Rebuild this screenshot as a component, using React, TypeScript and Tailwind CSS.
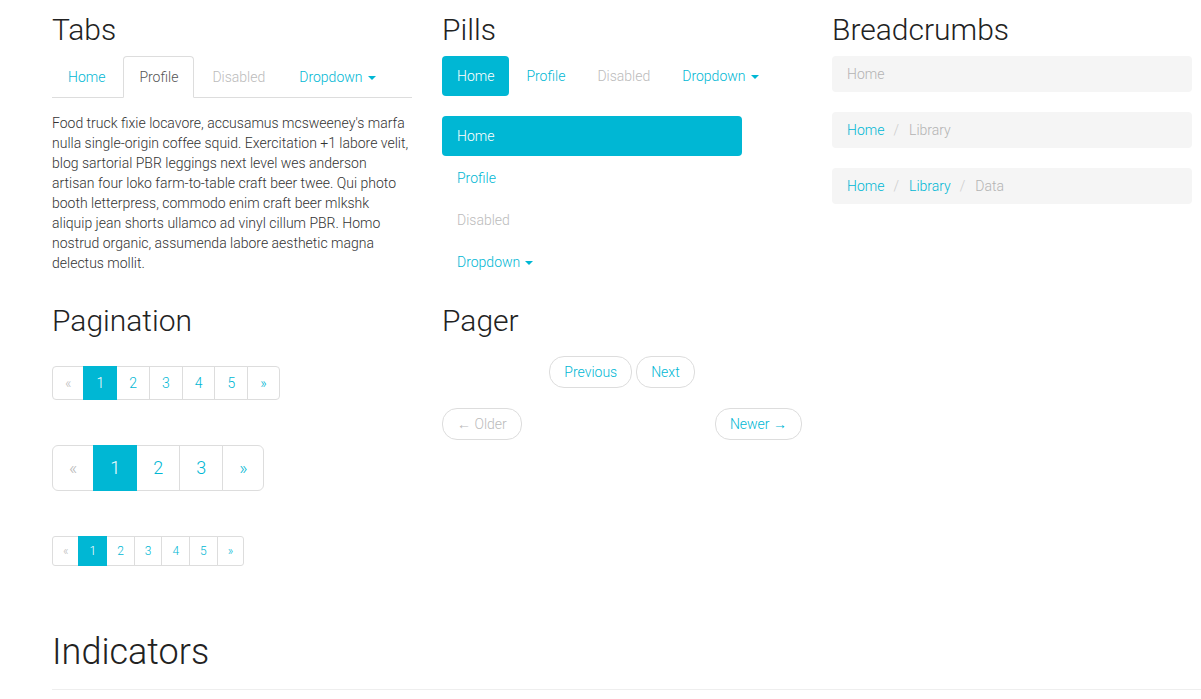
import React from 'react'

const CYAN = 'text-[#00b7d4]'

function Caret() {
    return (
        <span className="ml-[5px] inline-block h-0 w-0 border-x-4 border-t-4 border-x-transparent border-t-current align-middle" />
    )
}

function Heading({ children }: { children: React.ReactNode }) {
    return <h2 className="mb-[11px] text-[30px] font-light leading-[30px] text-[#222]">{children}</h2>
}

type Size = 'lg' | 'md' | 'sm'

const pageSizes: Record<Size, { item: string; first: string; last: string }> = {
    lg: { item: 'px-4 py-[10px] text-[18px] leading-6', first: 'rounded-l-[6px]', last: 'rounded-r-[6px]' },
    md: { item: 'px-3 py-[6px] text-[14px] leading-5', first: 'rounded-l-[4px]', last: 'rounded-r-[4px]' },
    sm: { item: 'px-[10px] py-[5px] text-[12px] leading-[18px]', first: 'rounded-l-[3px]', last: 'rounded-r-[3px]' },
}

function Pagination({ size, pages }: { size: Size; pages: number }) {
    const s = pageSizes[size]
    const nums = Array.from({ length: pages }, (_, i) => i + 1)
    return (
        <div className="flex">
            <span className={`${s.item} ${s.first} border border-[#ddd] bg-white text-[#bbb]`}>«</span>
            {nums.map((n) => (
                <span
                    key={n}
                    className={
                        n === 1
                            ? `${s.item} relative z-10 -ml-px border border-[#00b7d4] bg-[#00b7d4] text-white`
                            : `${s.item} -ml-px border border-[#ddd] bg-white ${CYAN}`
                    }
                >
                    {n}
                </span>
            ))}
            <span className={`${s.item} ${s.last} -ml-px border border-[#ddd] bg-white ${CYAN}`}>»</span>
        </div>
    )
}

function Crumbs({ items }: { items: string[] }) {
    return (
        <div className="mb-5 flex rounded-[4px] bg-[#f5f5f5] px-[15px] py-2 leading-5">
            {items.map((item, i) => (
                <span key={item} className="flex">
                    {i > 0 && <span className="pl-[9px] pr-[10px] text-[#ccc]">/</span>}
                    <span className={i === items.length - 1 ? 'text-[#b3b3b3]' : CYAN}>{item}</span>
                </span>
            ))}
        </div>
    )
}

export default function App() {
    return (
        <div className="min-h-screen w-full overflow-hidden bg-white pl-[52px] font-['Roboto',sans-serif] text-[14px] font-light leading-5 text-[#333]">
            {/* Row 1 */}
            <div className="flex items-start gap-[30px] pt-[15px]">
                {/* Tabs */}
                <div className="w-[360px]">
                    <Heading>Tabs</Heading>
                    <ul className="flex border-b border-[#ddd]">
                        <li className="-mb-px mr-[2px]">
                            <span className={`block rounded-t-[4px] border border-transparent px-[15px] py-[10px] ${CYAN}`}>Home</span>
                        </li>
                        <li className="-mb-px mr-[2px]">
                            <span className="block rounded-t-[4px] border border-[#ddd] border-b-white bg-white px-[15px] py-[10px] text-[#555]">Profile</span>
                        </li>
                        <li className="-mb-px mr-[2px]">
                            <span className="block rounded-t-[4px] border border-transparent px-[15px] py-[10px] text-[#bbb]">Disabled</span>
                        </li>
                        <li className="-mb-px mr-[2px]">
                            <span className={`block rounded-t-[4px] border border-transparent px-[15px] py-[10px] ${CYAN}`}>
                                Dropdown
                                <Caret />
                            </span>
                        </li>
                    </ul>
                    <p className="mt-[15px]">
                        Food truck fixie locavore, accusamus mcsweeney's marfa nulla single-origin coffee squid.
                        Exercitation +1 labore velit, blog sartorial PBR leggings next level wes anderson artisan four
                        loko farm-to-table craft beer twee. Qui photo booth letterpress, commodo enim craft beer mlkshk
                        aliquip jean shorts ullamco ad vinyl cillum PBR. Homo nostrud organic, assumenda labore
                        aesthetic magna delectus mollit.
                    </p>
                </div>

                {/* Pills */}
                <div className="w-[360px]">
                    <Heading>Pills</Heading>
                    <ul className="flex">
                        <li>
                            <span className="block rounded-[4px] bg-[#00b7d4] px-[15px] py-[10px] text-white">Home</span>
                        </li>
                        <li className="ml-[2px]">
                            <span className={`block px-[15px] py-[10px] ${CYAN}`}>Profile</span>
                        </li>
                        <li className="ml-[2px]">
                            <span className="block px-[15px] py-[10px] text-[#bbb]">Disabled</span>
                        </li>
                        <li className="ml-[2px]">
                            <span className={`block px-[15px] py-[10px] ${CYAN}`}>
                                Dropdown
                                <Caret />
                            </span>
                        </li>
                    </ul>
                    <ul className="mt-5 w-[300px]">
                        <li>
                            <span className="block rounded-[4px] bg-[#00b7d4] px-[15px] py-[10px] text-white">Home</span>
                        </li>
                        <li className="mt-[2px]">
                            <span className={`block px-[15px] py-[10px] ${CYAN}`}>Profile</span>
                        </li>
                        <li className="mt-[2px]">
                            <span className="block px-[15px] py-[10px] text-[#bbb]">Disabled</span>
                        </li>
                        <li className="mt-[2px]">
                            <span className={`block px-[15px] py-[10px] ${CYAN}`}>
                                Dropdown
                                <Caret />
                            </span>
                        </li>
                    </ul>
                </div>

                {/* Breadcrumbs */}
                <div className="w-[360px]">
                    <Heading>Breadcrumbs</Heading>
                    <Crumbs items={['Home']} />
                    <Crumbs items={['Home', 'Library']} />
                    <Crumbs items={['Home', 'Library', 'Data']} />
                </div>
            </div>

            {/* Row 2 */}
            <div className="mt-6 flex items-start gap-[30px]">
                <div className="w-[360px]">
                    <Heading>Pagination</Heading>
                    <div className="mt-[30px] flex flex-col items-start gap-[45px]">
                        <Pagination size="md" pages={5} />
                        <Pagination size="lg" pages={3} />
                        <Pagination size="sm" pages={5} />
                    </div>
                </div>

                <div className="w-[360px]">
                    <Heading>Pager</Heading>
                    <div className="mt-5 flex justify-center gap-1">
                        <span className={`rounded-[15px] border border-[#ddd] px-[14px] py-[5px] ${CYAN}`}>Previous</span>
                        <span className={`rounded-[15px] border border-[#ddd] px-[14px] py-[5px] ${CYAN}`}>Next</span>
                    </div>
                    <div className="mt-5 flex justify-between">
                        <span className="rounded-[15px] border border-[#ddd] px-[14px] py-[5px] text-[#bbb]">← Older</span>
                        <span className={`rounded-[15px] border border-[#ddd] px-[14px] py-[5px] ${CYAN}`}>Newer →</span>
                    </div>
                </div>
            </div>

            {/* Indicators */}
            <div className="mt-[63px] border-b border-[#eee] pb-[17px] pt-[3px]">
                <h1 className="text-[36px] font-light leading-10 text-[#222]">Indicators</h1>
            </div>
        </div>
    )
}
